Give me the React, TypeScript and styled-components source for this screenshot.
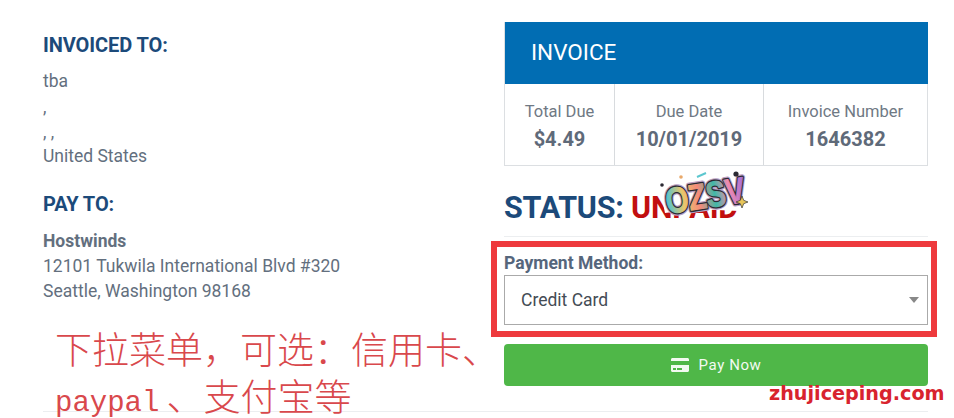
import React from 'react';
import styled, { createGlobalStyle } from 'styled-components';
import { FaCreditCard } from 'react-icons/fa';

const GlobalStyle = createGlobalStyle`
  html, body {
    margin: 0;
    padding: 0;
    background: #fff;
  }
`;

const Page = styled.div`
  position: relative;
  width: 954px;
  height: 418px;
  overflow: hidden;
  box-sizing: border-box;
  padding: 22px 26px 0 43px;
  font-family: Roboto, "Liberation Sans", sans-serif;
  color: #636f7e;
`;

const Columns = styled.div`
  display: grid;
  grid-template-columns: 461px 424px;
  height: 389px;
`;

const LeftColumn = styled.div`
  padding-top: 11px;
`;

const Heading = styled.h4<{ $gap: number }>`
  margin: 0 0 ${p => p.$gap}px;
  font-size: 20px;
  line-height: 24px;
  font-weight: 700;
  color: #1c4a7a;
  letter-spacing: -0.1px;
`;

const Address = styled.div<{ $gap: number }>`
  font-size: 17.5px;
  line-height: 25px;
  margin-bottom: ${p => p.$gap}px;
`;

const AddressLine = styled.div<{ $height?: number }>`
  line-height: ${p => p.$height ?? 25}px;
  white-space: nowrap;
`;

const Strong = styled.div`
  font-weight: 700;
`;

const Note = styled.div`
  width: 440px;
  margin-left: 12px;
  font-family: "Noto Sans CJK SC", serif;
  font-weight: 300;
  font-size: 37px;
  line-height: 47px;
  color: #d9484c;
  white-space: nowrap;
`;

const Mono = styled.span`
  font-family: "Liberation Mono", monospace;
  font-size: 29px;
  font-weight: 400;
  margin-right: 7px;
`;

const RightColumn = styled.div`
  position: relative;
`;

const Card = styled.div`
  border: 1px solid #dcdfe2;
  border-top: none;
  height: 144px;
  box-sizing: border-box;
`;

const CardHeader = styled.div`
  display: flex;
  align-items: center;
  height: 60px;
  margin: 0 -1px 0 0;
  padding: 0 0 0 26px;
  border-bottom: 2px solid #016db3;
  background: #016db3;
  color: #fff;
  font-size: 22.5px;
`;

const Stats = styled.div`
  display: grid;
  grid-template-columns: 109px 149px 1fr;
  height: 81px;
`;

const Stat = styled.div`
  padding-top: 16px;
  text-align: center;
  & + & {
    border-left: 1px solid #d8dbde;
  }
`;

const StatLabel = styled.div`
  font-size: 16.5px;
  line-height: 24px;
  color: #6f7984;
`;

const StatValue = styled.div`
  font-size: 20px;
  line-height: 30px;
  font-weight: 700;
  color: #5f6a79;
`;

const Status = styled.div`
  margin-top: 24px;
  font-size: 30.5px;
  line-height: 36px;
  font-weight: 700;
  color: #1c4a7a;
  letter-spacing: -0.2px;
`;

const Unpaid = styled.span`
  color: #c20f0f;
`;

const Logo = styled.svg`
  position: absolute;
  left: 151px;
  top: 141px;
`;

const Rule = styled.div`
  height: 1px;
  background: #eceef0;
`;

const StatusRule = styled(Rule)`
  margin-top: 10px;
`;

const MethodLabel = styled.label`
  display: block;
  margin-top: 15px;
  font-size: 17.5px;
  line-height: 22px;
  font-weight: 700;
  color: #56667c;
`;

const SelectBox = styled.div`
  position: relative;
  margin-top: 1px;
  height: 50px;
  box-sizing: border-box;
  border: 1px solid #aaaaaa;
  display: flex;
  align-items: center;
  padding: 0 0 1px 16px;
  font-size: 17.5px;
  color: #444c55;
  &::after {
    content: '';
    position: absolute;
    right: 8px;
    top: 21px;
    border-left: 5px solid transparent;
    border-right: 5px solid transparent;
    border-top: 6px solid #888;
  }
`;

const Highlight = styled.div`
  position: absolute;
  left: -13px;
  top: 219px;
  width: 446px;
  height: 96px;
  box-sizing: border-box;
  border: 6px solid #ee3a3d;
  pointer-events: none;
`;

const PayButton = styled.button`
  display: flex;
  align-items: center;
  justify-content: center;
  gap: 10px;
  width: 100%;
  height: 42px;
  margin-top: 19px;
  border: none;
  border-radius: 4px;
  background: #4fb748;
  color: #f2faf1;
  font-family: inherit;
  font-size: 15px;
  letter-spacing: 0.6px;
`;

const SiteMark = styled.div`
  position: absolute;
  left: 769px;
  top: 381px;
  font-family: "DejaVu Sans", sans-serif;
  font-weight: 700;
  font-size: 19.2px;
  line-height: 26px;
  color: #d8232e;
  white-space: nowrap;
`;

const stats = [
  { label: 'Total Due', value: '$4.49' },
  { label: 'Due Date', value: '10/01/2019' },
  { label: 'Invoice Number', value: '1646382' },
];

const OzsvLogo: React.FC = () => (
  <Logo width="104" height="66" viewBox="0 -6 104 66">
    <defs>
      <linearGradient id="ozsvFill" x1="0" y1="0" x2="1" y2="0">
        <stop offset="0" stopColor="#45c3d6" />
        <stop offset="0.22" stopColor="#e9c76b" />
        <stop offset="0.42" stopColor="#f58a7a" />
        <stop offset="0.62" stopColor="#3fb9a8" />
        <stop offset="0.8" stopColor="#f08ab0" />
        <stop offset="1" stopColor="#a66fd8" />
      </linearGradient>
    </defs>
    <path d="M4 16 L32 9 L94 3 L99 18 L88 34 L84 42 L40 40 L10 44 Z" fill="#fff" />
    <g
      transform="rotate(-9 50 25)"
      fontFamily="'Liberation Sans', sans-serif"
      fontWeight="700"
      fontSize="36"
      textAnchor="middle"
      strokeLinejoin="round"
    >
      <text x="50" y="39" textLength="80" lengthAdjust="spacingAndGlyphs" fill="none" stroke="#b9a0c4" strokeWidth="6">
        OZSV
      </text>
      <text x="50" y="39" textLength="80" lengthAdjust="spacingAndGlyphs" fill="none" stroke="#2b2a33" strokeWidth="3.6">
        OZSV
      </text>
      <text x="50" y="39" textLength="80" lengthAdjust="spacingAndGlyphs" fill="url(#ozsvFill)" stroke="url(#ozsvFill)" strokeWidth="1">
        OZSV
      </text>
    </g>
    <path d="M87 27 l1.7 4.3 4.3 1.7 -4.3 1.7 -1.7 4.3 -1.7 -4.3 -4.3 -1.7 4.3 -1.7 Z" fill="#e8c65a" stroke="#333" strokeWidth="0.7" />
    <circle cx="7" cy="16" r="1.8" fill="#2b2a33" />
    <circle cx="81" cy="5" r="2.6" fill="#2b2a33" />
    <circle cx="26" cy="8" r="1.8" fill="#e9a96b" />
    <path d="M42 8 l9 -4" stroke="#5cc7cf" strokeWidth="2" />
  </Logo>
);

export default function App() {
  return (
    <Page>
      <GlobalStyle />
      <Columns>
        <LeftColumn>
          <Heading $gap={12}>INVOICED TO:</Heading>
          <Address $gap={23}>
            <AddressLine>tba</AddressLine>
            <AddressLine $height={26}>,</AddressLine>
            <AddressLine $height={24}>, ,</AddressLine>
            <AddressLine>United States</AddressLine>
          </Address>
          <Heading $gap={13}>PAY TO:</Heading>
          <Address $gap={21}>
            <Strong>Hostwinds</Strong>
            <AddressLine>12101 Tukwila International Blvd #320</AddressLine>
            <AddressLine>Seattle, Washington 98168</AddressLine>
          </Address>
          <Note>
            下拉菜单，可选：信用卡、
            <br />
            <Mono>paypal</Mono>、支付宝等
          </Note>
        </LeftColumn>
        <RightColumn>
          <Card>
            <CardHeader>INVOICE</CardHeader>
            <Stats>
              {stats.map(stat => (
                <Stat key={stat.label}>
                  <StatLabel>{stat.label}</StatLabel>
                  <StatValue>{stat.value}</StatValue>
                </Stat>
              ))}
            </Stats>
          </Card>
          <Status>
            STATUS: <Unpaid>UNPAID</Unpaid>
          </Status>
          <OzsvLogo />
          <StatusRule />
          <MethodLabel>Payment Method:</MethodLabel>
          <SelectBox>Credit Card</SelectBox>
          <Highlight />
          <PayButton>
            <FaCreditCard size={18} />
            Pay Now
          </PayButton>
        </RightColumn>
      </Columns>
      <Rule />
      <SiteMark>zhujiceping.com</SiteMark>
    </Page>
  );
}
